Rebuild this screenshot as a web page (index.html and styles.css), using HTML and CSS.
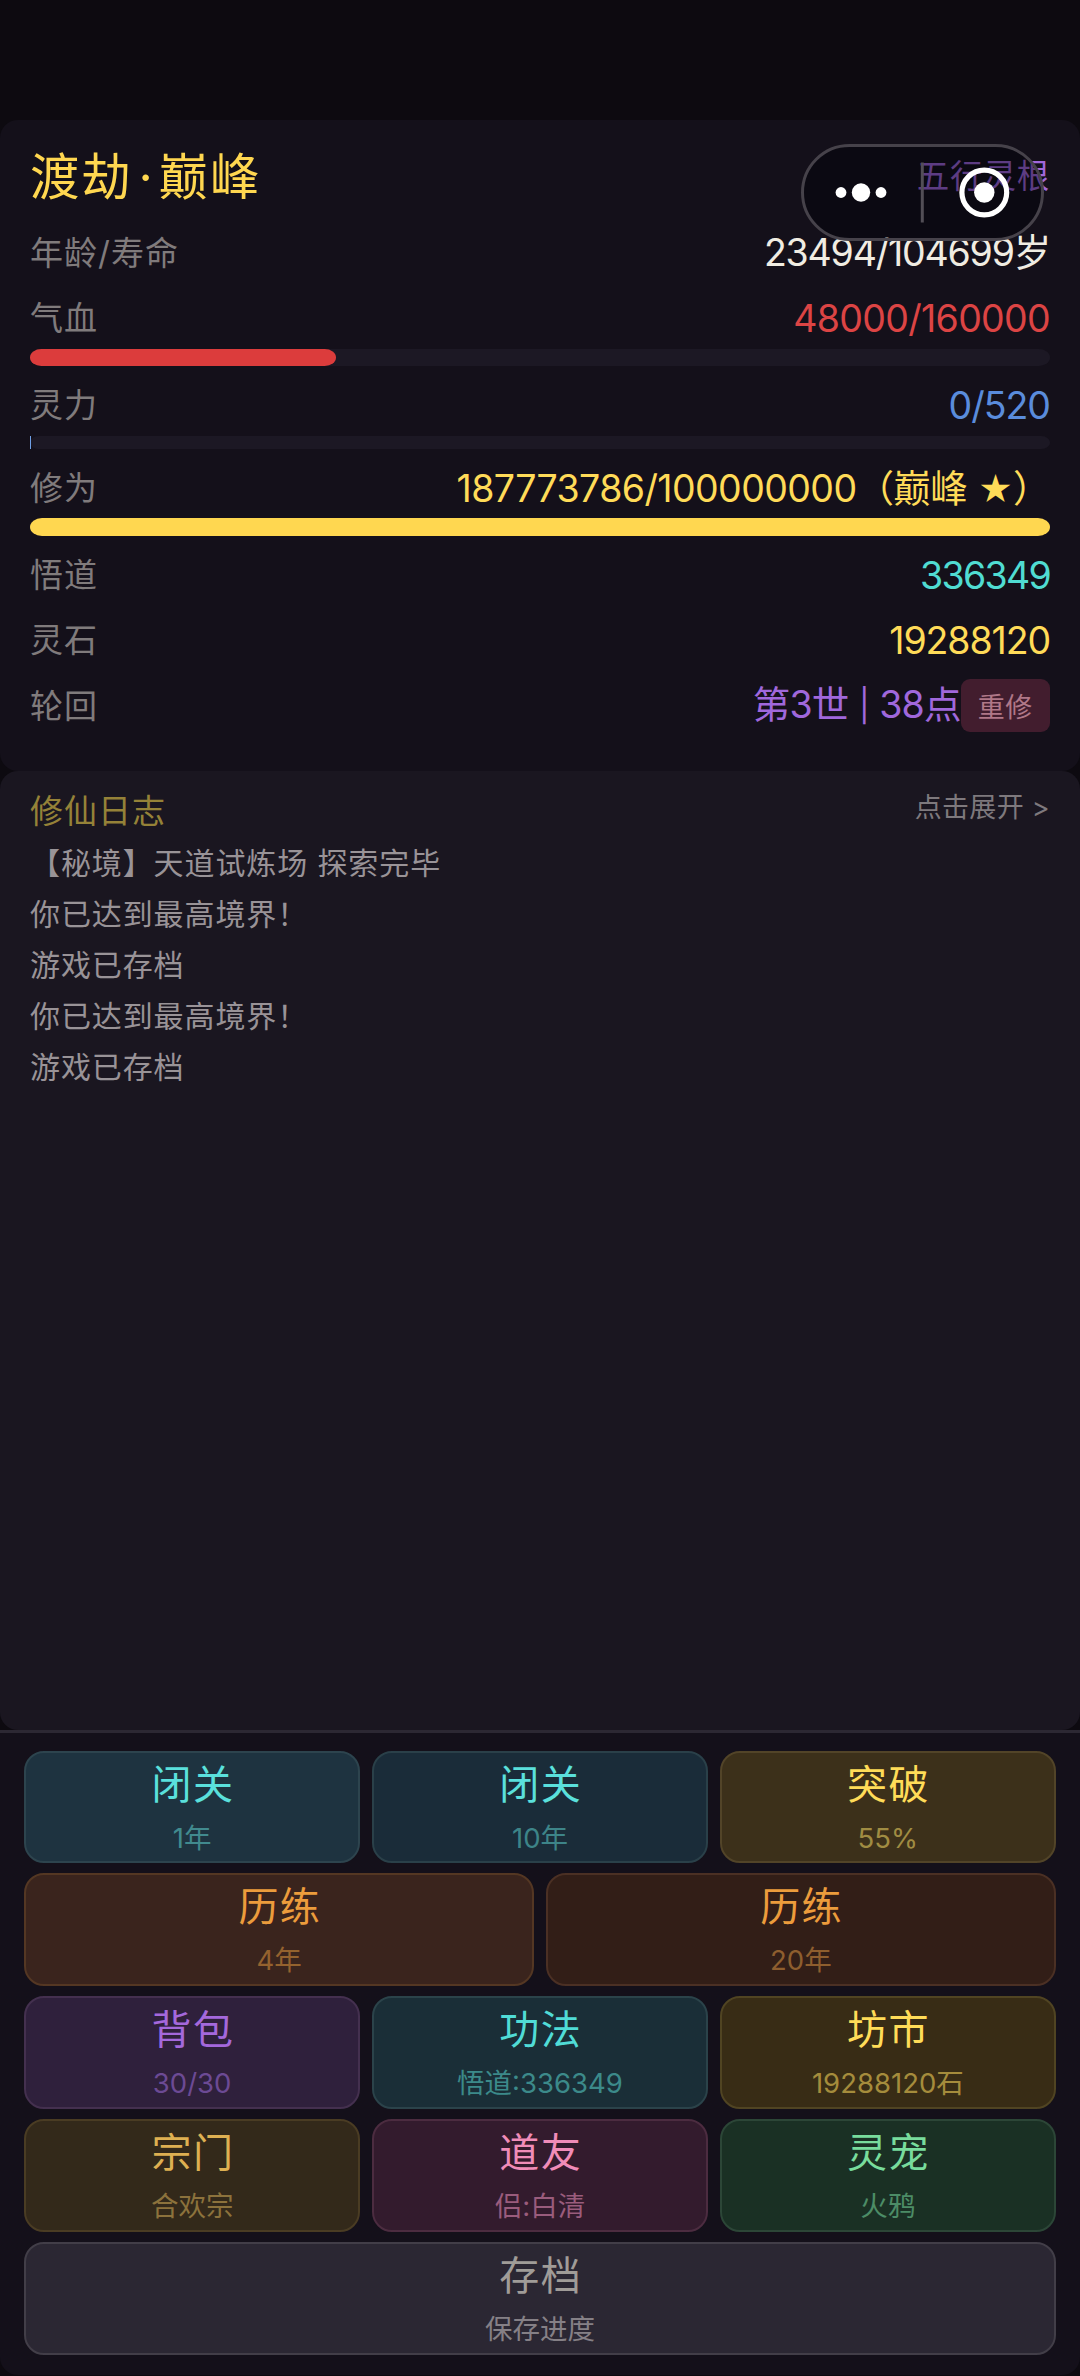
FILE: index.html
```html
<!DOCTYPE html>
<html lang="zh-CN">
<head>
<meta charset="utf-8">
<title>修仙</title>
<link rel="stylesheet" href="styles.css">
</head>
<body>
<div class="app">
  <section class="panel status">
    <div class="head">
      <h1 class="realm">渡劫<span class="dot">·</span>巅峰</h1>
      <span class="root">五行灵根</span>
    </div>
    <div class="row"><span class="label">年龄/寿命</span><span class="value age">23494/104699岁</span></div>
    <div class="row"><span class="label">气血</span><span class="value hp">48000/160000</span></div>
    <div class="bar"><div class="fill fill-hp" style="width:30%"></div></div>
    <div class="row"><span class="label">灵力</span><span class="value mp">0/520</span></div>
    <div class="bar bar-thin"><div class="fill fill-mp"></div></div>
    <div class="row"><span class="label">修为</span><span class="value exp">187773786/100000000（巅峰 <span class="star">★</span>）</span></div>
    <div class="bar"><div class="fill fill-exp" style="width:100%"></div></div>
    <div class="row"><span class="label">悟道</span><span class="value dao">336349</span></div>
    <div class="row"><span class="label">灵石</span><span class="value stone">19288120</span></div>
    <div class="row"><span class="label">轮回</span><span class="value life">第3世 <span class="sep">|</span> 38点</span><button class="redo">重修</button></div>
  </section>

  <section class="panel log">
    <div class="log-head"><h2 class="log-title">修仙日志</h2><span class="expand">点击展开 &gt;</span></div>
    <p class="line">【秘境】天道试炼场 探索完毕</p>
    <p class="line">你已达到最高境界！</p>
    <p class="line">游戏已存档</p>
    <p class="line">你已达到最高境界！</p>
    <p class="line">游戏已存档</p>
  </section>

  <section class="panel actions">
    <button class="btn c2 teal"><b>闭关</b><small>1年</small></button>
    <button class="btn c2 teal-dark"><b>闭关</b><small>10年</small></button>
    <button class="btn c2 gold"><b>突破</b><small>55%</small></button>
    <button class="btn c3 orange"><b>历练</b><small>4年</small></button>
    <button class="btn c3 orange-dark"><b>历练</b><small>20年</small></button>
    <button class="btn c2 purple"><b>背包</b><small>30/30</small></button>
    <button class="btn c2 cyan"><b>功法</b><small>悟道:336349</small></button>
    <button class="btn c2 gold-dark"><b>坊市</b><small>19288120石</small></button>
    <button class="btn c2 amber"><b>宗门</b><small>合欢宗</small></button>
    <button class="btn c2 pink"><b>道友</b><small>侣:白清</small></button>
    <button class="btn c2 green"><b>灵宠</b><small>火鸦</small></button>
    <button class="btn c6 gray"><b>存档</b><small>保存进度</small></button>
  </section>

  <div class="capsule">
    <svg viewBox="0 0 243 97" width="243" height="97">
      <rect class="capsule-body" x="1.5" y="1.5" width="240" height="94" rx="47"/>
      <path class="capsule-line" d="M121.3 18.5V78.5"/>
      <g fill="#fff"><circle cx="40" cy="48.5" r="5.4"/><circle cx="60" cy="48.5" r="9.2"/><circle cx="80" cy="48.5" r="5.4"/><circle cx="183.3" cy="48.5" r="10.2"/></g>
      <circle cx="183.3" cy="48.5" r="22.4" fill="none" stroke="#fff" stroke-width="5.2"/>
    </svg>
  </div>
</div>
</body>
</html>
```
FILE: styles.css
```css
* { box-sizing: border-box; }
html, body { margin: 0; background: #0d0a10; }
body { font-family: Inter, "Noto Sans CJK SC", sans-serif; }
h1, h2, p { margin: 0; font-weight: 400; }
button { font: inherit; border: 0; padding: 0; margin: 0; }
b { font-weight: 400; }

.app { position: relative; width: 1080px; height: 2376px; padding-top: 120px; display: flex; flex-direction: column; overflow: hidden; }
.panel { border-radius: 18px; }

.status { height: 650.5px; padding: 27px 30px 0; background: #14101a; flex: none; }
.head { display: flex; justify-content: space-between; align-items: flex-start; height: 58px; margin-bottom: 20px; }
.realm { font-size: 49.5px; line-height: 61px; letter-spacing: 1.8px; color: #ffd750; }
.dot { display: inline-block; width: 26px; letter-spacing: 0; text-align: center; }
.root { font-size: 32.5px; line-height: 60px; letter-spacing: .8px; color: #a068dc; }

.row { display: flex; align-items: center; height: 54px; margin-bottom: 11.7px; }
.row:has(+ .bar) { margin-bottom: 4px; }
.label { margin-right: auto; padding-bottom: 3px; font-size: 33px; letter-spacing: 1px; color: #807b7c; }
.value { padding-top: 3px; font-size: 37.5px; line-height: 54px; white-space: pre; }
.age { padding-top: 1px; color: #f0ece2; letter-spacing: -1.2px; }
.hp { color: #dc4444; letter-spacing: -.7px; }
.mp { color: #5a8cdc; letter-spacing: -1px; }
.exp, .stone { color: #ffdb58; }
.exp { letter-spacing: -.6px; }
.stone { letter-spacing: -1.1px; }
.dao { color: #50dcd2; letter-spacing: -1.7px; }
.life { padding-top: 1px; color: #a068dc; letter-spacing: -.9px; }
.sep { font-size: 32px; margin: 0 1px; position: relative; top: -1px; }
.star { display: inline-block; width: 36px; font-size: 34px; line-height: 1; text-align: center; }
.redo { width: 89.5px; height: 53.5px; border-radius: 9px; background: #421d2e; color: #b07888; font-size: 27px; letter-spacing: .5px; }

.bar { height: 17.5px; margin-bottom: 11.5px; border-radius: 12px / 9px; background: #1c1824; }
.bar-thin { height: 13px; }
.fill { height: 100%; border-radius: 12px / 9px; }
.fill-hp { background: #dc3c3c; }
.fill-mp { width: 1px; border-radius: 0; background: #6fa0e6; }
.fill-exp { background: #ffd750; }

.log { height: 959.5px; padding: 13.5px 30px 0; background: #1a1620; flex: none; }
.log-head { display: flex; justify-content: space-between; height: 54px; }
.log-title { font-size: 33px; line-height: 55px; letter-spacing: 1px; color: #958238; }
.expand { font-size: 27px; line-height: 48px; letter-spacing: .3px; color: #7e797d; }
.line { height: 51px; font-size: 30px; line-height: 51px; letter-spacing: .9px; color: #999397; }

.actions { height: 645px; padding: 17.5px 24px 0; border-top: 3px solid #2c2833; border-radius: 0 0 18px 18px; background: #14101a; flex: none; display: grid; grid-template-columns: repeat(6, 1fr); grid-auto-rows: 112.7px; column-gap: 11.5px; row-gap: 10.3px; }
.c2 { grid-column: span 2; }
.c3 { grid-column: span 3; }
.c6 { grid-column: span 6; }
.btn { display: flex; flex-direction: column; align-items: center; border: 2px solid; border-radius: 20px; padding-top: 3px; }
.btn b { font-size: 40px; line-height: 58px; letter-spacing: 1.5px; margin-right: -1.5px; }
.btn small { font-size: 27.5px; line-height: 48px; }

.teal { background: #1e3340; border-color: #2d444e; color: #5ae0dc; }
.teal small { color: #418a8e; }
.teal-dark { background: #1a2c39; border-color: #2a4049; color: #5ae0dc; }
.teal-dark small { color: #3d8488; }
.gold { background: #3c301a; border-color: #524428; color: #ffdc58; }
.gold small { color: #a08c42; }
.orange { background: #3a241d; border-color: #543723; color: #ec9c3c; }
.orange small { color: #94622e; }
.orange-dark { background: #321e17; border-color: #4b3024; color: #ec9c3c; }
.orange-dark small { color: #8e5e2e; }
.purple { background: #2f203c; border-color: #44304f; color: #a468dc; }
.purple small { color: #6c4a94; }
.cyan { background: #1a2e37; border-color: #2b434a; color: #50dcd6; }
.cyan small { color: #3c8a8a; }
.gold-dark { background: #382c15; border-color: #504422; color: #ffdc58; }
.gold-dark small { color: #a58c3c; }
.amber { background: #33291a; border-color: #4a3c23; color: #deb052; }
.amber small { color: #8c723c; }
.pink { background: #331b2d; border-color: #4c2c40; color: #f08cb8; }
.pink small { color: #9a5c7c; }
.green { background: #1a3024; border-color: #2c4637; color: #78dc9c; }
.green small { color: #4c8c66; }
.gray { background: #2b2733; border-color: #423e48; color: #a09c98; }
.gray small { color: #858086; }

/* floating host controls, over the status panel */
.capsule { position: absolute; left: 801px; top: 143.5px; }
.capsule svg { display: block; }
.capsule-body { fill: rgba(0, 0, 8, .42); stroke: #46424a; stroke-width: 3; }
.capsule-line { stroke: #524e56; stroke-width: 3; }
```
